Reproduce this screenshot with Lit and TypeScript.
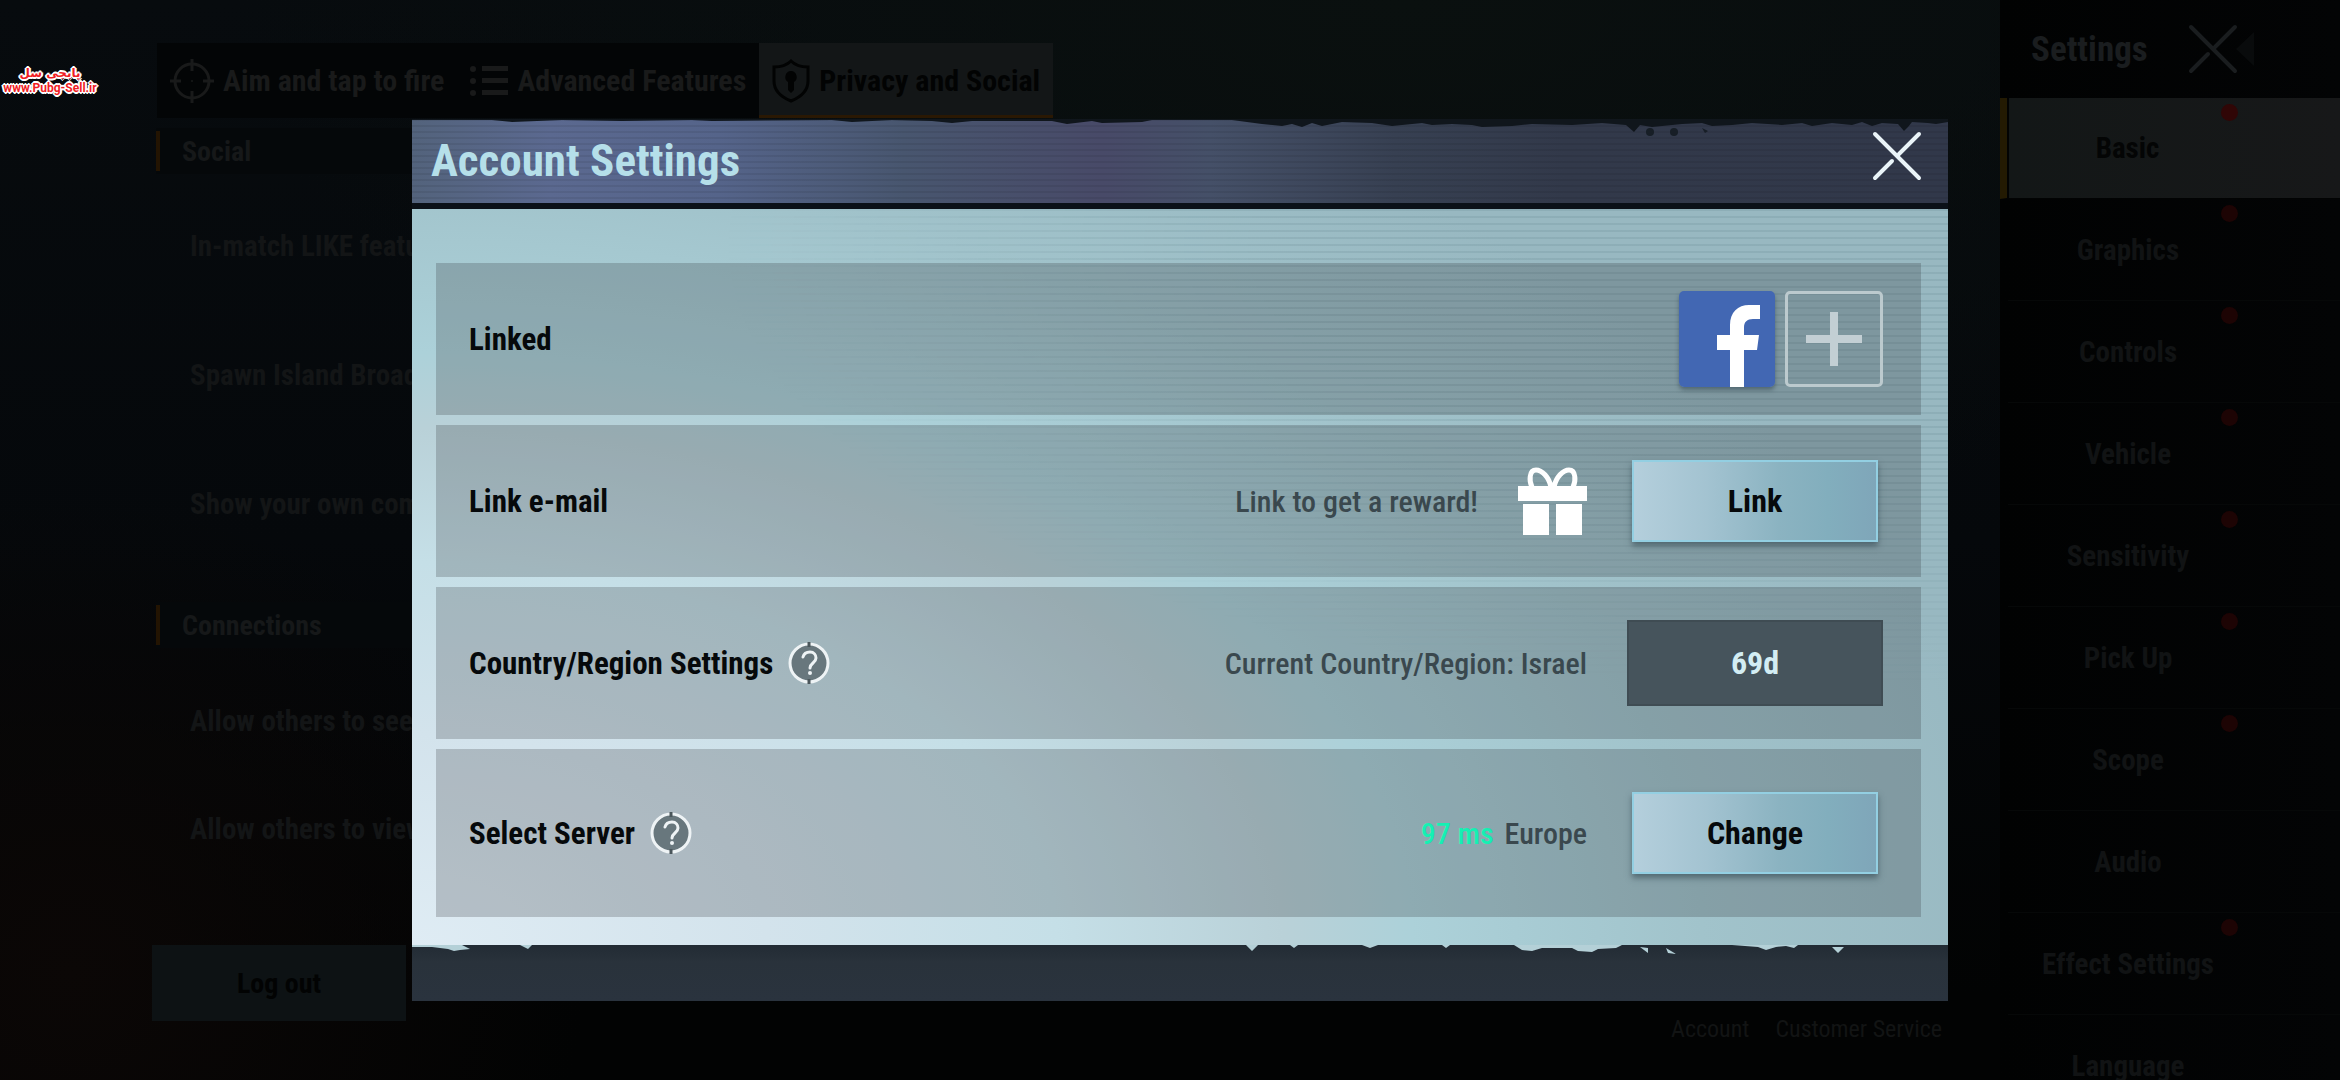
import { LitElement, html, css, svg, nothing } from "lit";
import { customElement, property } from "lit/decorators.js";

const crosshairIcon = svg`
  <svg class="icon" width="44" height="46" viewBox="0 0 44 46" fill="none" stroke="currentColor" stroke-width="3" aria-hidden="true">
    <circle cx="22" cy="23" r="17" />
    <path d="M22 1v12M22 33v12M0 23h11M33 23h11" />
    <circle cx="22" cy="23" r="1" stroke="none" fill="currentColor" />
  </svg>`;

const listIcon = svg`
  <svg class="icon" width="38" height="32" viewBox="0 0 38 32" fill="currentColor" aria-hidden="true">
    <circle cx="3" cy="4" r="3" /><circle cx="3" cy="16" r="3" /><circle cx="3" cy="28" r="3" />
    <path d="M12 1h26v5H12zM12 13h26v5H12zM12 25h26v5H12z" />
  </svg>`;

const shieldIcon = svg`
  <svg class="icon" width="38" height="44" viewBox="0 0 38 44" aria-hidden="true">
    <path d="M19 2C14 7 8 8 2 8v14c0 10 7 16 17 20 10-4 17-10 17-20V8C30 8 24 7 19 2z" fill="none" stroke="currentColor" stroke-width="3" />
    <path d="M19 12a6 6 0 0 1 3 11v8l-3 3-3-3v-8a6 6 0 0 1 3-11z" fill="currentColor" />
  </svg>`;

const crossPath = svg`<path d="M3 3l44 44M47 3L27 23M20 30L3 47" fill="none" stroke="currentColor" stroke-width="4" stroke-linecap="round" />`;

const facebookIcon = svg`
  <svg width="96" height="96" viewBox="0 0 96 96" aria-hidden="true">
    <rect width="96" height="96" rx="5" fill="#4267b3" />
    <path d="M51 96V59H38V44H51V34C51 21 59 14 70 14H81V28H74C68 28 65 31 65 36V44H80L78 59H65V96Z" fill="#fff" />
  </svg>`;

const plusIcon = svg`
  <svg width="56" height="54" viewBox="0 0 56 54" aria-hidden="true">
    <path d="M24 0h8v23h24v8H32v23h-8V31H0v-8h24z" fill="#c3cfd4" />
  </svg>`;

const giftIcon = svg`
  <svg width="69" height="68" viewBox="0 0 69 68" aria-hidden="true">
    <path d="M33 20C31 10 24 3 18 3C11 3 11 14 14 20M36 20C38 10 45 3 51 3C58 3 58 14 55 20" fill="none" stroke="#fff" stroke-width="5" />
    <path d="M0 19h69v15H0zM5 37h26v31H5zM38 37h26v31H38z" fill="#fff" />
  </svg>`;

const helpIcon = svg`
  <svg width="42" height="42" viewBox="0 0 42 42" aria-hidden="true">
    <circle cx="21" cy="21" r="19" fill="#68777d" stroke="#eef3f5" stroke-width="3" />
    <path d="M21 0v5M21 37v5" stroke="#4a565b" stroke-width="3" />
    <path d="M15 15c1-4 4-5 7-5 4 0 6 3 6 6 0 5-6 5-6 10" fill="none" stroke="#eef3f5" stroke-width="3" stroke-linecap="round" />
    <circle cx="22" cy="31" r="2" fill="#eef3f5" />
  </svg>`;

const gameFont = css`
  :host {
    font-family: "Roboto Condensed", "Open Sans Condensed", "Liberation Sans", sans-serif;
    font-weight: 700;
  }
  button {
    font: inherit;
    color: inherit;
    border: 0;
    padding: 0;
    margin: 0;
    background: none;
    cursor: pointer;
  }
  svg {
    display: block;
    flex: none;
  }
`;

@customElement("settings-page")
class SettingsPage extends LitElement {
  static styles = [
    gameFont,
    css`
      :host {
        display: flex;
        flex-direction: column;
        min-width: 0;
        color: #131516;
        font-size: 29px;
        white-space: nowrap;
      }
      .tabs {
        display: flex;
        align-self: flex-start;
        margin: 43px 0 0 157px;
        height: 75px;
        background: #030506;
      }
      .tab {
        display: flex;
        align-items: center;
        gap: 9px;
        padding: 0 13px;
        font-size: 30px;
        color: #191a1a;
      }
      .tab.active {
        color: #020303;
        background: #131617;
        box-shadow: inset 0 -3px #2a1803;
      }
      .heading {
        display: flex;
        align-items: center;
        height: 46px;
        margin: 10px 58px 0 156px;
        background: #05080a;
        font-size: 28px;
        font-weight: 700;
        color: #161819;
      }
      .heading::before {
        content: "";
        width: 4px;
        height: 40px;
        margin-right: 22px;
        background: #231402;
      }
      .heading.second {
        margin-top: 34px;
      }
      .list {
        list-style: none;
        margin: 0;
        padding: 7px 0 0 190px;
      }
      .list li {
        display: flex;
        align-items: center;
        height: 129px;
      }
      .list.compact {
        padding-top: 19px;
      }
      .list.compact li {
        height: 108px;
      }
      .foot {
        display: flex;
        align-items: flex-end;
        justify-content: space-between;
        margin-top: auto;
        padding: 0 58px 38px 152px;
      }
      .logout {
        width: 254px;
        height: 76px;
        margin-bottom: 21px;
        background: #0d1214;
        font-size: 28px;
        color: #020303;
      }
      .links {
        display: flex;
        gap: 26px;
        font-size: 24px;
        font-weight: 400;
        line-height: 26px;
      }
      .links a {
        color: #121414;
        text-decoration: none;
      }
    `,
  ];

  render() {
    return html`
      <nav class="tabs" aria-label="Settings sections">
        <button class="tab">${crosshairIcon}Aim and tap to fire</button>
        <button class="tab">${listIcon}Advanced Features</button>
        <button class="tab active">${shieldIcon}Privacy and Social</button>
      </nav>
      <h2 class="heading">Social</h2>
      <ul class="list">
        <li>In-match LIKE featu</li>
        <li>Spawn Island Broad</li>
        <li>Show your own com</li>
      </ul>
      <h2 class="heading second">Connections</h2>
      <ul class="list compact">
        <li>Allow others to see</li>
        <li>Allow others to view</li>
      </ul>
      <div class="foot">
        <button class="logout">Log out</button>
        <div class="links"><a href="#account">Account</a><a href="#service">Customer Service</a></div>
      </div>
    `;
  }
}

@customElement("settings-menu")
class SettingsMenu extends LitElement {
  static styles = [
    gameFont,
    css`
      :host {
        display: block;
        overflow: hidden;
        background: linear-gradient(90deg, #010202, #030405);
        color: #111314;
        font-size: 29px;
      }
      .top {
        display: flex;
        align-items: center;
        height: 98px;
        padding-left: 31px;
        color: #1a1d1f;
      }
      .top h2 {
        flex: none;
        width: 157px;
        margin: 0;
        font-size: 35px;
        font-weight: 700;
      }
      .item {
        position: relative;
        display: block;
        width: calc(100% - 8px);
        height: 102px;
        margin-left: 8px;
        padding-right: 92px;
        border-bottom: 1px solid #060808;
        white-space: nowrap;
      }
      .item.active {
        width: 100%;
        height: 101px;
        margin-left: 0;
        border-left: 7px solid #231a02;
        border-bottom-color: #020303;
        background: linear-gradient(90deg, #020303 2px, #131717 2px, #171819);
        color: #040505;
      }
      .dot {
        position: absolute;
        top: 6px;
        right: 102px;
        width: 17px;
        height: 17px;
        border-radius: 50%;
        background: #1d0404;
      }
      .active .dot {
        background: #300606;
      }
    `,
  ];

  private items: [string, boolean][] = [
    ["Basic", true],
    ["Graphics", true],
    ["Controls", true],
    ["Vehicle", true],
    ["Sensitivity", true],
    ["Pick Up", true],
    ["Scope", true],
    ["Audio", false],
    ["Effect Settings", true],
    ["Language", false],
  ];

  render() {
    return html`
      <div class="top">
        <h2>Settings</h2>
        <button aria-label="Close settings">
          <svg width="66" height="50" viewBox="0 0 66 50">
            ${crossPath}
            <path d="M66 8v34L48 25z" fill="#090b0c" />
          </svg>
        </button>
      </div>
      ${this.items.map(
        ([name, unread], i) => html`
          <button class="item ${i === 0 ? "active" : ""}">
            ${name}${unread ? html`<span class="dot"></span>` : nothing}
          </button>
        `
      )}
    `;
  }
}

@customElement("account-row")
class AccountRow extends LitElement {
  static styles = [
    gameFont,
    css`
      :host {
        display: flex;
        align-items: center;
        min-height: 152px;
        padding: 0 38px 0 33px;
        background: rgba(35, 35, 40, 0.22);
        color: #06090b;
        font-size: 31px;
      }
      .label {
        margin-right: 15px;
      }
      .end {
        display: flex;
        align-items: center;
        margin-left: auto;
      }
    `,
  ];

  @property() label = "";
  @property({ type: Boolean }) help = false;

  render() {
    return html`
      <span class="label">${this.label}</span>
      ${this.help ? html`<button aria-label="Help: ${this.label}">${helpIcon}</button>` : nothing}
      <div class="end"><slot></slot></div>
    `;
  }
}

@customElement("account-dialog")
class AccountDialog extends LitElement {
  static styles = [
    gameFont,
    css`
      :host {
        display: flex;
        flex-direction: column;
        color: #06090b;
      }
      .head {
        position: relative;
        display: flex;
        align-items: center;
        justify-content: space-between;
        height: 84px;
        padding: 0 26px 0 19px;
        border-bottom: 6px solid #0b1118;
        background:
          repeating-linear-gradient(180deg, rgba(0, 0, 0, 0.07) 0 2px, transparent 2px 6px),
          linear-gradient(90deg, #53637c, #5b6990 9%, #55648a 20%, #48566f 32%, #484a68 45%, #455068 52%, #374052 64%, #32394a 75%, #31384a);
      }
      .edge {
        position: absolute;
        left: 0;
        top: 0;
        width: 100%;
      }
      .title {
        position: relative;
        margin: 0;
        font-size: 45px;
        font-weight: 700;
        line-height: 84px;
        color: #b5dfe9;
      }
      .close {
        position: relative;
        margin-bottom: 10px;
        color: #eaf4f8;
      }
      .body {
        position: relative;
        display: flex;
        flex-direction: column;
        gap: 10px;
        padding: 54px 27px 28px 24px;
        background: radial-gradient(ellipse 105% 130% at 0% 100%, #dfecf4 0%, #d3e3ec 22%, #c5dfe7 40%, #b9d1d8 54%, #acd1d9 62%, #a1c3cb 80%, #98b8c1 100%);
      }
      .body::before {
        content: "";
        position: absolute;
        inset: 0;
        background: repeating-linear-gradient(180deg, rgba(50, 85, 95, 0.1) 0 2px, transparent 2px 7px);
        mask-image: radial-gradient(ellipse 70% 60% at 90% 5%, #000 50%, transparent);
      }
      account-row {
        position: relative;
      }
      .last {
        min-height: 168px;
      }
      .foot {
        position: relative;
        height: 56px;
        background: linear-gradient(180deg, #222b34, #29323b 30%, #2a333e);
      }
      .note,
      .ping {
        font-size: 30px;
        font-weight: 500;
      }
      .note {
        margin-right: 40px;
        color: #3a484e;
      }
      .ping {
        margin-right: 11px;
        color: #15f0b3;
      }
      .gift {
        margin-right: 40px;
      }
      .facebook {
        margin-right: 10px;
        border-radius: 5px;
        box-shadow: 0 3px 4px rgba(40, 60, 70, 0.5);
      }
      .add {
        display: flex;
        align-items: center;
        justify-content: center;
        width: 98px;
        height: 96px;
        border: 3px solid #bccace;
        border-radius: 5px;
      }
      .action {
        width: 246px;
        height: 82px;
        margin: 0 5px;
        border: 2px solid #93cfe2;
        background: linear-gradient(90deg, #b4cfdc, #a3c3d1 30%, #8bb3c1 60%, #82aebd 80%, #7fa6b9);
        box-shadow: 0 4px 6px rgba(40, 60, 70, 0.55);
        font-size: 32px;
      }
      .wait {
        width: 256px;
        height: 86px;
        border: 2px solid #3f4c53;
        background: #46545c;
        color: #d3edf3;
        font-size: 32px;
      }
    `,
  ];

  render() {
    return html`
      <header class="head">
        <svg class="edge" height="22" viewBox="0 0 1536 22" preserveAspectRatio="none" aria-hidden="true">
          <path d="M0 0H1536V3L1524 5L1516 4L1500 3L1496 8L1492 12L1486 5L1470 4L1460 7L1450 3L1440 6L1420 4L1400 7L1390 4L1370 6L1340 4L1320 6L1300 7L1290 4L1270 5L1240 8L1228 6L1222 13L1214 6L1190 4L1160 6L1120 5L1100 7L1070 8L1060 6L1040 5L1020 6L1010 4L980 7L960 4L930 3L910 7L900 4L890 8L880 5L870 7L850 5L835 3L820 1L740 1L730 3L690 4L680 2L655 5L640 2L560 2L540 4L520 2L480 1L440 3L420 1L300 2L280 1L210 2L150 1L100 3L80 1L0 1Z" fill="#10161c" />
          <g fill="#171e26">
            <circle cx="1238" cy="13" r="4" /><circle cx="1262" cy="13" r="4" /><path d="M1290 9l6 3-3 2z" />
          </g>
        </svg>
        <h1 class="title">Account Settings</h1>
        <button class="close" aria-label="Close">
          <svg width="50" height="50" viewBox="0 0 50 50">${crossPath}</svg>
        </button>
      </header>
      <div class="body">
        <account-row label="Linked">
          <span class="facebook" role="img" aria-label="Facebook">${facebookIcon}</span>
          <button class="add" aria-label="Link another account">${plusIcon}</button>
        </account-row>
        <account-row label="Link e-mail">
          <span class="note">Link to get a reward!</span>
          <span class="gift">${giftIcon}</span>
          <button class="action">Link</button>
        </account-row>
        <account-row label="Country/Region Settings" help>
          <span class="note">Current Country/Region: Israel</span>
          <button class="wait">69d</button>
        </account-row>
        <account-row class="last" label="Select Server" help>
          <span class="ping">97 ms</span>
          <span class="note">Europe</span>
          <button class="action">Change</button>
        </account-row>
      </div>
      <footer class="foot">
        <svg class="edge" height="10" viewBox="0 0 1536 10" preserveAspectRatio="none" aria-hidden="true">
          <path d="M0 0H50L58 4L48 5L42 6L36 4L20 2L0 2ZM108 0h12l-4 4zM834 0h12l-6 6zM878 0h8l-4 3zM950 0h16l-8 3zM1030 0h8l-4 3zM1102 0H1210L1204 3L1186 4L1180 7L1166 6L1160 3L1130 3L1120 6L1110 5ZM1228 2l8 1 0 5zM1254 3l10 6-8-1zM1320 0h66l-4 3-8-2-10 1-10 3-8-3zM1420 2h12l-6 6z" fill="#b4d0d7" />
        </svg>
      </footer>
    `;
  }
}

@customElement("app-root")
class AppRoot extends LitElement {
  static styles = css`
    :host {
      position: relative;
      display: grid;
      grid-template-columns: minmax(0, 1fr) 340px;
      height: 100vh;
      overflow: hidden;
      background:
        radial-gradient(ellipse 22% 45% at 3% 90%, #0b0706, transparent),
        radial-gradient(ellipse 50% 50% at 60% 0%, #0a100f, transparent),
        linear-gradient(180deg, #070b0e, #05080b 50%, #020303 92%);
    }
    .overlay {
      position: absolute;
      inset: 119px 392px auto 412px;
    }
    .watermark {
      position: absolute;
      left: 0;
      top: 66px;
      width: 100px;
      text-align: center;
      font: 700 12px/15px Roboto, "Open Sans", "DejaVu Sans", sans-serif;
      color: #f01d24;
      white-space: nowrap;
      text-shadow:
        1px 1px #fff, -1px -1px #fff, 1px -1px #fff, -1px 1px #fff,
        2px 0 #fff, -2px 0 #fff, 0 2px #fff, 0 -2px #fff;
    }
    .watermark span {
      display: block;
    }
    .watermark [lang="fa"] {
      font-family: "DejaVu Sans", sans-serif;
    }
  `;

  render() {
    return html`
      <settings-page></settings-page>
      <settings-menu></settings-menu>
      <account-dialog class="overlay" role="dialog" aria-label="Account Settings"></account-dialog>
      <div class="watermark"><span dir="rtl" lang="fa">پابجی سل</span><span>www.Pubg-Sell.ir</span></div>
    `;
  }
}
